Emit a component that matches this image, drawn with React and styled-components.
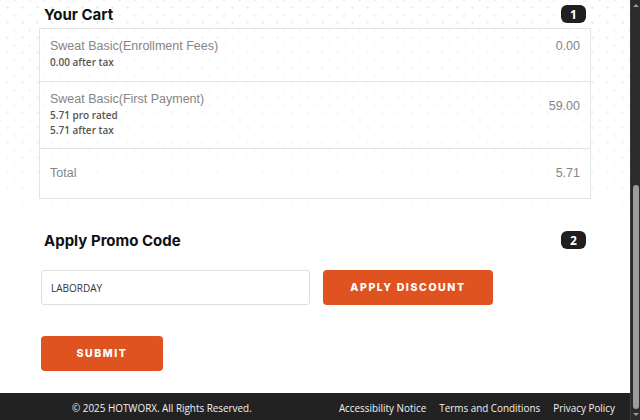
import React from 'react'
import styled, { createGlobalStyle } from 'styled-components'

const GlobalStyle = createGlobalStyle`
  html, body {
    margin: 0;
    padding: 0;
    background: #fff;
  }
  * { box-sizing: border-box; }
`

const Page = styled.div`
  display: flex;
  width: 640px;
  height: 420px;
  overflow: hidden;
`

const Main = styled.div`
  display: flex;
  flex-direction: column;
  width: 630px;
  height: 420px;
`

const Content = styled.div`
  flex: 1;
  padding: 0 39px;
  background:
    linear-gradient(to bottom, rgba(255, 255, 255, 0) 0, rgba(255, 255, 255, 0.3) 150px, #fff 240px),
    radial-gradient(circle, #efefef 1px, transparent 1.6px) 0 0 / 15px 15px,
    radial-gradient(circle, #f4f4f4 1px, transparent 1.6px) 7px 8px / 15px 15px,
    #fff;
`

const HeadRow = styled.div`
  display: flex;
  align-items: center;
  justify-content: space-between;
  height: 28px;
  padding: 0 5px;
  margin-top: ${p => p.$top || 0}px;
`

const Heading = styled.h2`
  margin: 0;
  font-family: Inter, "Open Sans", sans-serif;
  font-weight: 700;
  font-size: 15px;
  color: #111;
`

const Badge = styled.span`
  display: inline-flex;
  align-items: center;
  justify-content: center;
  width: 25px;
  height: 18px;
  border-radius: 6px;
  background: #1f1f1f;
  color: #fff;
  font-family: "Open Sans", sans-serif;
  font-weight: 700;
  font-size: 12px;
`

const CartBox = styled.div`
  border: 1px solid #e4e4e4;
  background: rgba(255, 255, 255, 0.4);
`

const CartRow = styled.div`
  display: flex;
  justify-content: space-between;
  align-items: flex-start;
  padding: ${p => p.$pad};
  border-bottom: ${p => (p.$last ? 'none' : '1px solid #e4e4e4')};
`

const ItemTitle = styled.div`
  font-family: "Liberation Sans", Arial, sans-serif;
  font-size: 12.5px;
  line-height: 18px;
  color: #858585;
`

const ItemNote = styled.div`
  font-family: "Open Sans", sans-serif;
  font-weight: 600;
  font-size: 10px;
  line-height: 15px;
  color: #555;
`

const Amount = styled.div`
  font-family: "Liberation Sans", Arial, sans-serif;
  font-size: 12.5px;
  line-height: 18px;
  color: #858585;
  margin-top: ${p => p.$offset || 0}px;
`

const PromoRow = styled.div`
  display: flex;
  gap: 13px;
  margin: 16px 0 0 2px;
`

const Input = styled.input`
  width: 269px;
  height: 35px;
  border: 1px solid #dedede;
  border-radius: 3px;
  padding: 0 9px;
  font-family: "Open Sans", sans-serif;
  font-size: 10px;
  color: #333;
  background: #fff;
  outline: none;
`

const OrangeButton = styled.button`
  width: ${p => p.$w}px;
  height: 35px;
  border: none;
  border-radius: 4px;
  background: #df5320;
  color: #fff;
  font-family: Inter, "Open Sans", sans-serif;
  font-weight: 800;
  font-size: 10.5px;
  letter-spacing: 1.6px;
  cursor: pointer;
`

const SubmitWrap = styled.div`
  margin: 31px 0 0 2px;
`

const Footer = styled.footer`
  display: flex;
  align-items: center;
  justify-content: space-between;
  height: 27px;
  padding: 2px 15px 0 72px;
  background: #222;
  color: #f2f2f2;
  font-family: "Open Sans", sans-serif;
  font-size: 9.9px;
`

const Links = styled.nav`
  display: flex;
  gap: 13px;
`

const Scrollbar = styled.div`
  display: flex;
  flex-direction: column;
  align-items: center;
  width: 10px;
  height: 420px;
  background: #2b2b2b;
  border-left: 1px solid #3a3a3a;
`

const Arrow = styled.div`
  width: 0;
  height: 0;
  margin: 4px 0;
  border-left: 3px solid transparent;
  border-right: 3px solid transparent;
  ${p => (p.$down ? 'border-top: 3px solid #9a9a9a;' : 'border-bottom: 3px solid #9a9a9a;')}
`

const Thumb = styled.div`
  width: 6px;
  height: 224px;
  margin-top: auto;
  border-radius: 3px;
  background: #9c9c9c;
`

export default function App () {
  return (
    <Page>
      <GlobalStyle />
      <Main>
        <Content>
          <HeadRow>
            <Heading>Your Cart</Heading>
            <Badge>1</Badge>
          </HeadRow>
          <CartBox>
            <CartRow $pad="8px 10px 11px 10px">
              <div>
                <ItemTitle>Sweat Basic(Enrollment Fees)</ItemTitle>
                <ItemNote>0.00 after tax</ItemNote>
              </div>
              <Amount>0.00</Amount>
            </CartRow>
            <CartRow $pad="8px 10px 10px 10px">
              <div>
                <ItemTitle>Sweat Basic(First Payment)</ItemTitle>
                <ItemNote>5.71 pro rated</ItemNote>
                <ItemNote>5.71 after tax</ItemNote>
              </div>
              <Amount $offset={7}>59.00</Amount>
            </CartRow>
            <CartRow $pad="15px 10px 16px 10px" $last>
              <ItemTitle>Total</ItemTitle>
              <Amount>5.71</Amount>
            </CartRow>
          </CartBox>

          <HeadRow $top={27}>
            <Heading>Apply Promo Code</Heading>
            <Badge>2</Badge>
          </HeadRow>
          <PromoRow>
            <Input defaultValue="LABORDAY" />
            <OrangeButton $w={170}>APPLY DISCOUNT</OrangeButton>
          </PromoRow>
          <SubmitWrap>
            <OrangeButton $w={122}>SUBMIT</OrangeButton>
          </SubmitWrap>
        </Content>
        <Footer>
          <span>© 2025 HOTWORX. All Rights Reserved.</span>
          <Links>
            <span>Accessibility Notice</span>
            <span>Terms and Conditions</span>
            <span>Privacy Policy</span>
          </Links>
        </Footer>
      </Main>
      <Scrollbar>
        <Arrow />
        <Thumb />
        <Arrow $down />
      </Scrollbar>
    </Page>
  )
}
